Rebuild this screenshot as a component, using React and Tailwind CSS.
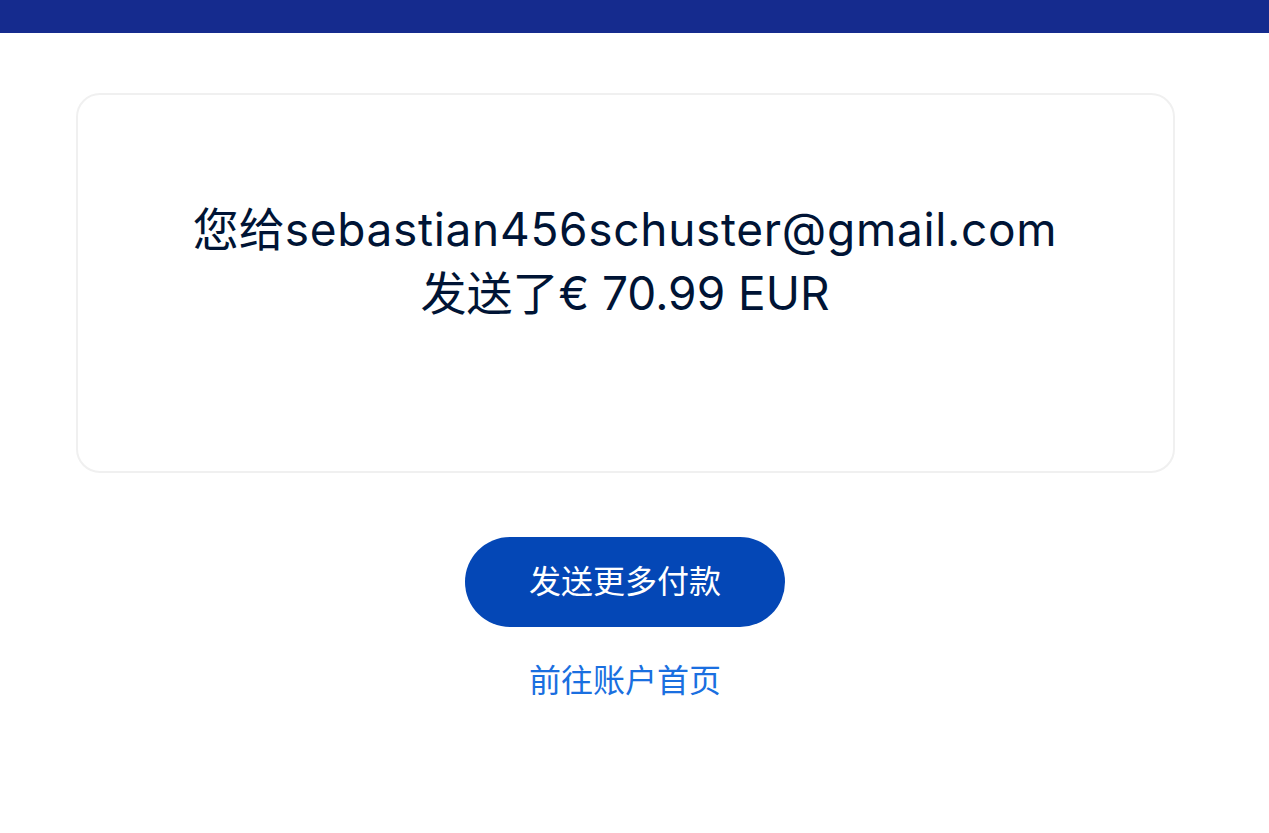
import React from "react";

const font = { fontFamily: '"Inter", "Noto Sans CJK SC", sans-serif' };

export default function App() {
  return (
    <div className="min-h-[833px] bg-white" style={font}>
      <div className="h-[33px] bg-[#152b8e]" />
      <div className="w-[1250px]">
        <div className="mx-auto mt-[60px] w-[1099px] rounded-[24px] border-2 border-[#f0f0f0] pt-[102px] pb-[146px] text-center">
          <p className="text-[46px] leading-[64px] text-[#001435]">
            您给<span className="tracking-[0.7px]">sebastian456schuster@gmail.com</span>
            <br />
            发送了€ 70.99 EUR
          </p>
        </div>
        <div className="mt-[64px] flex flex-col items-center">
          <button className="h-[90px] w-[320px] rounded-full bg-[#0447b6] text-[32px] text-white">
            发送更多付款
          </button>
          <a href="#" className="mt-[32px] text-[32px] leading-[44px] text-[#1a6fe0]">
            前往账户首页
          </a>
        </div>
      </div>
    </div>
  );
}
